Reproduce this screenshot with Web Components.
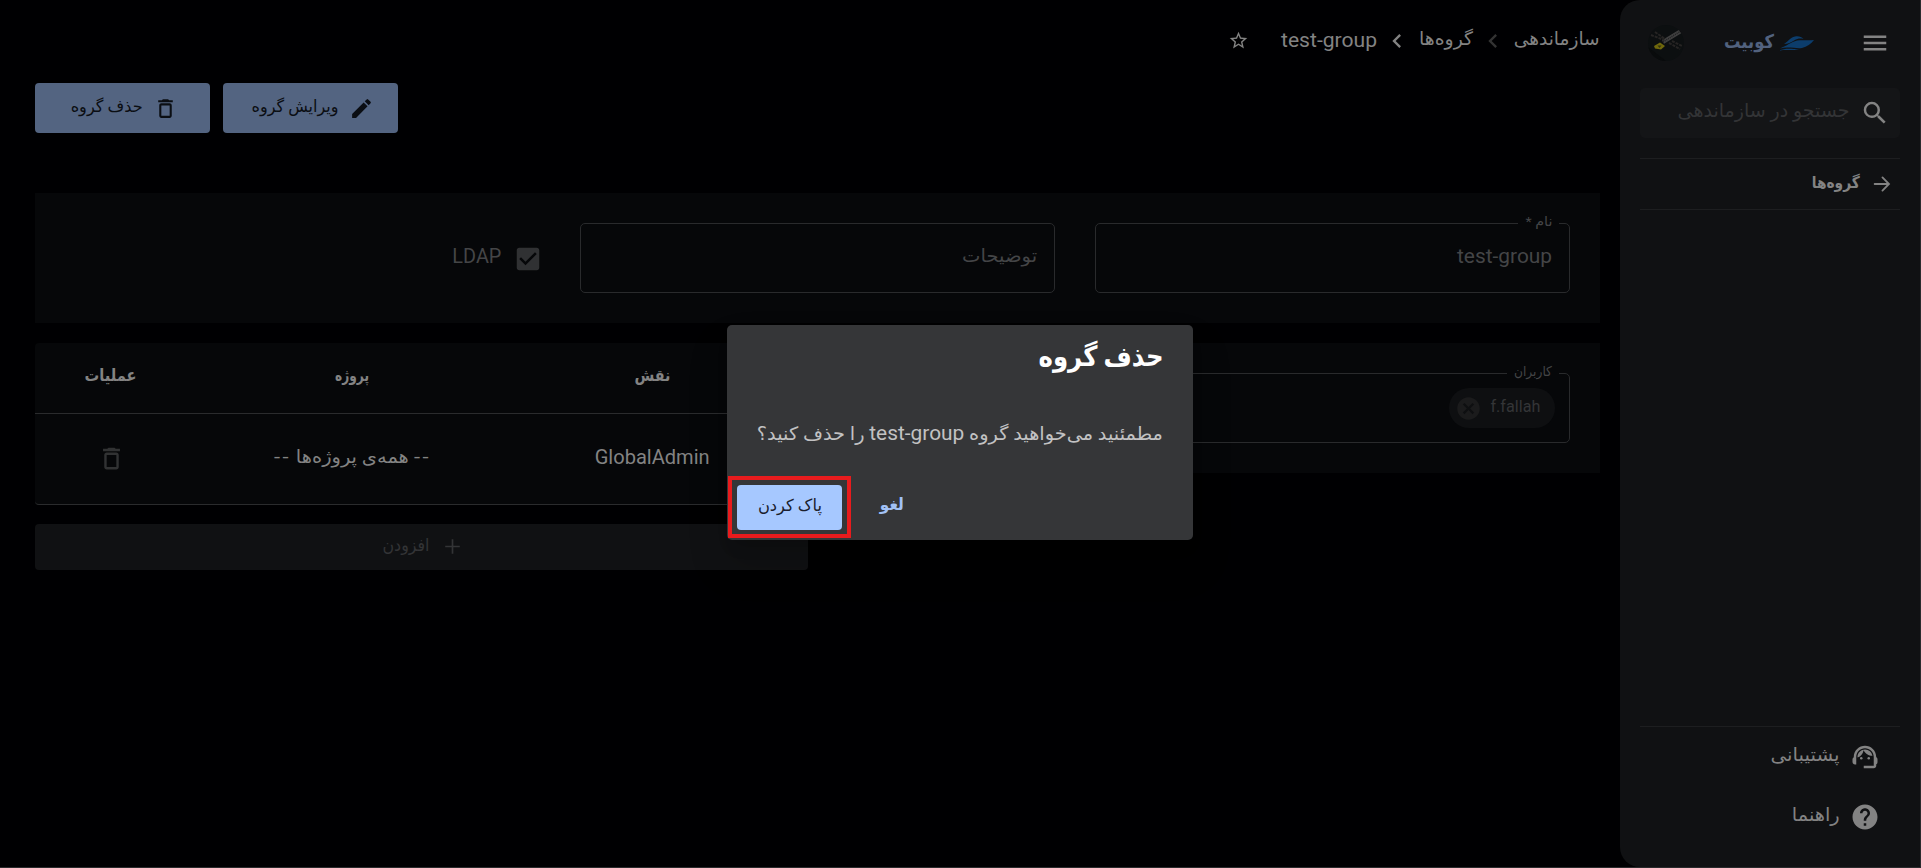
<!DOCTYPE html>
<html lang="fa"><head><meta charset="utf-8"><title>حذف گروه</title>
<style>html,body{margin:0;background:#000002;overflow:hidden}</style></head><body><app-shell></app-shell>
<script>
const define=(name,html,init)=>{const t=document.createElement('template');t.innerHTML=html;
customElements.define(name,class extends HTMLElement{connectedCallback(){if(this.shadowRoot)return;this.attachShadow({mode:'open'}).append(t.content.cloneNode(true));if(init)init(this,this.shadowRoot)}})};

/* single line label, condensed or stretched to its w attribute */
define('fit-text',`<style>:host{display:block;flex:none;direction:rtl;white-space:nowrap;height:1.2em;line-height:1.2em;font-family:Roboto,"DejaVu Sans",sans-serif}span{display:inline-block;transform-origin:100% 50%}</style><span><slot></slot></span>`,(h,r)=>{
 const w=+h.getAttribute('w');h.style.width=w+'px';const s=r.querySelector('span');
 s.style.transform='translateY(-1px) scaleX('+(w/s.getBoundingClientRect().width)+')'});

const icons={
menu:'<path d="M3 18h18v-2H3v2zm0-5h18v-2H3v2zm0-7v2h18V6H3z"/>',
search:'<path d="M15.5 14h-.79l-.28-.27A6.471 6.471 0 0 0 16 9.5 6.5 6.5 0 1 0 9.5 16c1.61 0 3.09-.59 4.23-1.57l.27.28v.79l5 4.99L20.49 19l-4.99-5zm-6 0C7.01 14 5 11.99 5 9.5S7.01 5 9.5 5 14 7.01 14 9.5 11.99 14 9.5 14z"/>',
arrow:'<path d="M4 12h15.2M12.5 4.8l7.1 7.2-7.1 7.2" fill="none" stroke="currentColor" stroke-width="2" stroke-linecap="round"/>',
chev:'<path d="M15.41 7.41 14 6l-6 6 6 6 1.41-1.41L10.83 12z"/>',
star:'<path d="m22 9.24-7.19-.62L12 2 9.19 8.63 2 9.24l5.46 4.73L5.82 21 12 17.27 18.18 21l-1.63-7.03L22 9.24zM12 15.4l-3.76 2.27 1-4.28-3.32-2.88 4.38-.38L12 6.1l1.71 4.04 4.38.38-3.32 2.88 1 4.28L12 15.4z"/>',
trash:'<path d="M6 19c0 1.100.9 2 2 2h8c1.100 0 2-.9 2-2V9c0-1.100-.9-2-2-2H8c-1.100 0-2 .9-2 2v10zM8 9h8v10H8V9zm7.500-5-1-1h-5l-1 1H5v2h14V4z"/>',
edit:'<path d="M3 17.250V21h3.750L17.810 9.940l-3.750-3.750L3 17.250zM20.710 7.040a1 1 0 0 0 0-1.410l-2.340-2.340a1 1 0 0 0-1.410 0l-1.830 1.830 3.750 3.750 1.830-1.830z"/>',
check:'<path d="M19 3H5c-1.110 0-2 .9-2 2v14c0 1.100.89 2 2 2h14c1.110 0 2-.9 2-2V5c0-1.100-.89-2-2-2zm-9 14-5-5 1.410-1.410L10 14.170l7.590-7.590L19 8l-9 9z"/>',
plus:'<path d="M19 12.800h-6.200V19h-1.600v-6.200H5v-1.600h6.200V5h1.600v6.200H19z"/>',
cancel:'<path d="M12 2C6.470 2 2 6.470 2 12s4.470 10 10 10 10-4.470 10-10S17.530 2 12 2zm5 13.590L15.590 17 12 13.410 8.410 17 7 15.590 10.590 12 7 8.410 8.410 7 12 10.590 15.590 7 17 8.410 13.410 12 17 15.590z"/>',
help:'<path d="M12 2C6.480 2 2 6.480 2 12s4.480 10 10 10 10-4.480 10-10S17.520 2 12 2zm1 17h-2v-2h2v2zm2.070-7.750-.9.920C13.450 12.900 13 13.500 13 15h-2v-.5c0-1.100.45-2.100 1.170-2.830l1.240-1.260c.37-.36.590-.86.590-1.410 0-1.100-.9-2-2-2s-2 .9-2 2H8c0-2.210 1.790-4 4-4s4 1.790 4 4c0 .88-.36 1.680-.93 2.250z"/>',
agent:'<path d="M21 12.220C21 6.730 16.740 3 12 3c-4.690 0-9 3.650-9 9.280-.6.340-1 .98-1 1.720v2c0 1.100.9 2 2 2h1v-6.100c0-3.870 3.130-7 7-7s7 3.130 7 7V19h-8v2h8c1.100 0 2-.9 2-2v-1.220c.59-.31 1-.92 1-1.640v-2.300c0-.7-.41-1.310-1-1.620z"/><circle cx="9" cy="13" r="1"/><circle cx="15" cy="13" r="1"/><path d="M18 11.030A6.040 6.040 0 0 0 12.050 6c-3.030 0-6.290 2.510-6.030 6.450a8.075 8.075 0 0 0 4.860-5.890c1.310 2.630 4 4.440 7.120 4.470z"/>'};
define('ui-icon',`<style>:host{display:block;flex:none}svg{display:block;fill:currentColor}</style><svg viewBox="0 0 24 24"></svg>`,(h,r)=>{
 const s=r.querySelector('svg'),z=h.getAttribute('size');s.setAttribute('width',z);s.setAttribute('height',z);s.innerHTML=icons[h.getAttribute('name')]});

define('brand-boat',`<style>:host{display:block;flex:none}svg{display:block}</style><svg width="35" height="15" viewBox="0 0 35 15"><path fill="#0c3d6c" d="M5 8C9 6 11 1.500 16 .6c3.500-.7 6.500.2 8.500 2.500-3-.9-6-.6-9 1.200C12 6.500 9 8 5 8zM1 12.400C8 10 12 6 18 4.600c5-1 11 .2 17-.7-3 4-7 6.600-12 8-5 1-14-1.600-22 .5zM0 14.700C5 12.400 10 12.600 15 13.100c2 .2 3 .1 5-.2-6 2.300-12 .3-20 1.800z"/></svg>`);

define('user-avatar',`<style>:host{display:block;flex:none}svg{display:block;border-radius:50%}</style><svg width="36" height="36" viewBox="0 0 36 36"><rect width="36" height="36" fill="#0c0f10"/><path d="M0 22l18 14H0z" fill="#090b0c"/><g fill="none"><path d="M15 17L33 6" stroke="#404040" stroke-width="4"/><path d="M15 17L33 6" stroke="#202122" stroke-width="1.500" stroke-dasharray="1 1"/><path d="M3 10l13 5M7 7l10 7M21 18l11 6M24 16l10 5" stroke="#262423" stroke-width="2" stroke-dasharray="3 1"/></g><path d="M6 21l6-3.500 5 3.500-4 3.500-6-1z" fill="#6f680c"/><path d="M9.500 20.500l4 0-2 2.500z" fill="#34310e"/></svg>`);

define('side-bar',`<style>:host{display:flex;flex-direction:column;box-sizing:border-box;width:300px;height:867px;background:#101113;border-radius:20px 0 0 20px;padding:0 20px;color:#838383}
.top{display:flex;align-items:center;height:50px;margin-top:18px;padding:0 10px 0 8px}.brand{display:flex;align-items:center;gap:6px;margin-left:40px;margin-right:auto;color:#52627e;font-weight:bold;font-size:19px}brand-boat{margin:2px 0 0 -1px}
.search{display:flex;box-sizing:border-box;align-items:center;justify-content:flex-end;gap:10px;height:50px;margin-top:20px;padding-right:10px;border-radius:5px;background:#141517;font-size:19px;color:#333436}.search ui-icon{color:#838383}
.nav{display:flex;box-sizing:border-box;align-items:center;justify-content:flex-end;gap:11px;height:52px;margin-top:20px;border:solid #1d1e20;border-width:1px 0;padding-right:7px;font-size:16px;font-weight:bold}
.foot{margin-top:auto;height:141px;border-top:1px solid #1d1e20;box-sizing:border-box}.row{display:flex;align-items:center;justify-content:flex-end;gap:10px;height:60px;padding-right:20px;font-size:18.500px}.row fit-text{margin-top:-2px}</style>
<div class="top"><user-avatar></user-avatar><div class="brand"><fit-text w="50">کوبیت</fit-text><brand-boat></brand-boat></div><ui-icon name="menu" size="30"></ui-icon></div>
<div class="search"><fit-text w="172" style="margin-top:-1px">جستجو در سازماندهی</fit-text><ui-icon name="search" size="30"></ui-icon></div>
<div class="nav"><fit-text w="48">گروه‌ها</fit-text><ui-icon name="arrow" size="22"></ui-icon></div>
<div class="foot"><div class="row"><fit-text w="69">پشتیبانی</fit-text><ui-icon name="agent" size="30"></ui-icon></div><div class="row"><fit-text w="48">راهنما</fit-text><ui-icon name="help" size="30"></ui-icon></div></div>`);

define('bread-crumbs',`<style>:host{display:flex;align-items:center;justify-content:flex-end;height:80px;color:#838383;font-size:18.500px}.dim{color:#333}fit-text{margin-top:1px}</style>
<ui-icon name="star" size="21"></ui-icon><fit-text w="96" style="margin-left:32px;font-size:20px">test-group</fit-text><ui-icon name="chev" size="28" style="margin:1px 8px 0 6px"></ui-icon><fit-text w="54">گروه‌ها</fit-text><ui-icon class="dim" name="chev" size="28" style="margin:1px 7px 0 6px"></ui-icon><fit-text w="86">سازماندهی</fit-text>`);

define('action-button',`<style>:host{display:flex;align-items:center;justify-content:center;gap:10px;width:175px;height:50px;border-radius:4px;background:#536481;color:#0b0e13;font-size:16.500px;box-sizing:border-box;padding-left:4px}</style><slot></slot>`);

define('text-field',`<style>:host{display:block;position:relative;box-sizing:border-box;height:70px;border:1px solid #292a2c;border-radius:5px;color:#444547}
.label{position:absolute;right:10px;top:-10px;padding:0 7px;background:#060709;font-size:13.500px}.body{display:flex;box-sizing:border-box;justify-content:flex-end;align-items:center;height:68px;padding-right:17px}</style><div class="label"><slot name="label"></slot></div><div class="body"><slot></slot></div>`,(h,r)=>{if(!h.querySelector('[slot=label]'))r.querySelector('.label').remove()});

define('user-chip',`<style>:host{display:flex;align-items:center;box-sizing:border-box;width:106px;height:40px;border-radius:20px;background:#0e0f11;color:#343537;padding-left:6px;gap:8px;font-size:17px;margin-right:-3px}ui-icon{color:#1b1b1c}</style><ui-icon name="cancel" size="27"></ui-icon><fit-text w="50" style="margin-top:-2px">f.fallah</fit-text>`);

define('role-table',`<style>:host{display:block;width:773px}.table{background:#060709;border-radius:4px;color:#838383}.r{display:grid;grid-template-columns:152px 330px 1fr;border-bottom:1px solid #2a2b2d;justify-items:center;align-items:center;box-sizing:border-box}.h{height:71px;font-size:16.500px;font-weight:bold}.b{height:91px;font-size:18px;border-radius:0 0 4px 4px}.h fit-text{margin-top:-2px}.b fit-text{margin-top:-3px}.b ui-icon{color:#313233;margin-top:-1px}
.r>:nth-child(3){margin-left:-20px}.dash{display:flex;gap:5px}.dash [w="17"]{letter-spacing:2px}.add{display:flex;align-items:center;justify-content:center;gap:10px;height:46px;margin-top:19px;border-radius:4px;background:#101113;color:#333436;font-size:17px;padding-left:4px;box-sizing:border-box}.add fit-text{margin-top:-2px}.add ui-icon{margin-top:-1px}</style>
<div class="table"><div class="r h"><fit-text w="52">عملیات</fit-text><fit-text w="34">پروژه</fit-text><fit-text w="36">نقش</fit-text></div>
<div class="r b"><ui-icon name="trash" size="29"></ui-icon><div class="dash"><fit-text w="17">--</fit-text><fit-text w="113">همه‌ی پروژه‌ها</fit-text><fit-text w="17">--</fit-text></div><fit-text w="115" style="font-size:20px">GlobalAdmin</fit-text></div></div>
<div class="add"><fit-text w="47">افزودن</fit-text><ui-icon name="plus" size="25"></ui-icon></div>`);

define('confirm-dialog',`<style>:host{display:flex;flex-direction:column;box-sizing:border-box;width:466px;height:215px;border-radius:5px;background:#353638;color:#c2c2c3;box-shadow:0 11px 15px -7px #0003,0 24px 38px 3px #0002}
.title{display:flex;justify-content:flex-end;height:66px;padding:16px 30px 0;color:#fff;font-size:28px;font-weight:bold;box-sizing:border-box}.msg{display:flex;justify-content:flex-end;align-items:center;height:84px;padding:2px 30px 0 0;box-sizing:border-box;font-size:18.500px}
.actions{display:flex;align-items:center;margin-left:1px}.ring{box-sizing:border-box;width:123px;height:62px;border:4px solid #e81b1d;padding:5px;margin-top:1px}.ok{display:flex;align-items:center;justify-content:center;height:45px;width:105px;border-radius:4px;background:#a6c8ff;color:#1a202c;font-size:16.500px}.ok fit-text,.no{margin-top:-2px}.no{margin-left:29px;color:#a2c1f5;font-size:16.500px;font-weight:bold}</style>
<div class="title"><fit-text w="125">حذف گروه</fit-text></div><div class="msg"><fit-text w="406">مطمئنید می‌خواهید گروه <span style="font-size:20px">test-group</span> را حذف کنید؟</fit-text></div>
<div class="actions"><div class="ring"><div class="ok"><fit-text w="64">پاک کردن</fit-text></div></div><fit-text class="no" w="24">لغو</fit-text></div>`);

define('app-shell',`<style>:host{display:flex;box-sizing:border-box;width:1921px;height:868px;position:relative;background:#000002;border:solid #2a2b2d;border-width:0 1px 1px 0}
main{width:1565px;margin-left:35px;margin-right:20px}.acts{display:flex;gap:13px;margin-top:3px}.card{background:#060709;box-sizing:border-box}.form{display:flex;height:130px;margin-top:60px;justify-content:flex-end;padding:30px 30px 0 0}.form text-field{width:475px;margin-left:40px}.ldap{display:flex;gap:12px;height:70px;align-items:center;color:#444547;font-size:20px;margin-right:-3px}.ldap fit-text{margin-top:-2px}.ldap ui-icon{color:#303133;margin-top:2px}.form .v{margin-top:-3px}
.cols{display:flex;gap:20px;margin-top:20px}.users{width:772px;height:130px;padding:30px}confirm-dialog{position:absolute;left:727px;top:325px}</style>
<main><bread-crumbs></bread-crumbs><div class="acts"><action-button><fit-text w="72">حذف گروه</fit-text><ui-icon name="trash" size="25"></ui-icon></action-button><action-button><fit-text w="87">ویرایش گروه</fit-text><ui-icon name="edit" size="25"></ui-icon></action-button></div>
<div class="card form"><div class="ldap"><fit-text w="49">LDAP</fit-text><ui-icon name="check" size="30"></ui-icon></div><text-field><fit-text class="v" w="75" style="font-size:18px">توضیحات</fit-text></text-field><text-field><fit-text slot="label" w="27">نام *</fit-text><fit-text class="v" w="95" style="font-size:20px">test-group</fit-text></text-field></div>
<div class="cols"><role-table></role-table><div class="card users"><text-field><fit-text slot="label" w="38">کاربران</fit-text><user-chip></user-chip></text-field></div></div></main>
<side-bar></side-bar><confirm-dialog></confirm-dialog>`);
</script></body></html>
